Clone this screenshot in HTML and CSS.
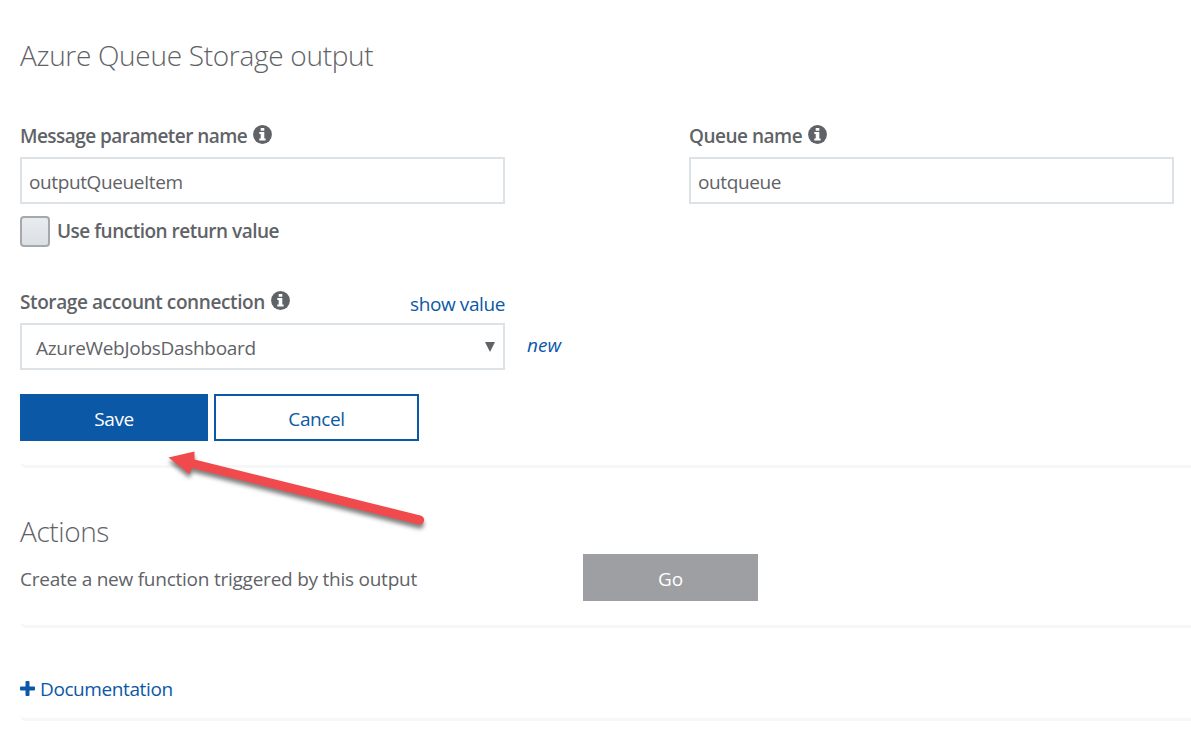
FILE: index.html
```html
<!DOCTYPE html>
<html lang="en">
<head>
<meta charset="utf-8">
<title>Azure Queue Storage output</title>
<link rel="stylesheet" href="styles.css">
</head>
<body>
<svg class="defs" aria-hidden="true">
  <symbol id="info" viewBox="0 0 19 19">
    <circle cx="9.5" cy="9.5" r="9.4" fill="#5f6368"/>
    <path d="M7.7 3h3.6v2.8H7.7zM6.3 7.1h5v6.4h1.3v2H6.3v-2h1.4V9.1H6.3z" fill="#fff"/>
  </symbol>
</svg>
<main class="page">
  <section class="panel output">
    <h1 class="title t-title"><span>Azure Queue Storage output</span></h1>
    <div class="fields">
      <div class="field">
        <div class="label"><span class="t-message">Message parameter name</span><svg class="info"><use href="#info"/></svg></div>
        <div class="textbox"><span>outputQueueItem</span></div>
        <div class="check"><span class="checkbox"></span><span class="t-use">Use function return value</span></div>
      </div>
      <div class="field">
        <div class="label"><span class="t-queue">Queue name</span><svg class="info"><use href="#info"/></svg></div>
        <div class="textbox"><span>outqueue</span></div>
      </div>
    </div>
    <div class="connection">
      <div class="field">
        <div class="label"><span class="t-storage">Storage account connection</span><svg class="info"><use href="#info"/></svg><a class="show">show value</a></div>
        <div class="textbox select"><span class="t-jobs">AzureWebJobsDashboard</span><svg class="caret" viewBox="0 0 10 10"><path d="M0 0h10L5 10z" fill="#5f6368"/></svg></div>
      </div>
      <a class="new">new</a>
    </div>
    <div class="buttons">
      <div class="button save"><span>Save</span></div>
      <div class="button cancel"><span>Cancel</span></div>
    </div>
  </section>
  <section class="panel actions">
    <h2 class="title t-actions"><span>Actions</span></h2>
    <div class="action-row">
      <span class="desc">Create a new function triggered by this output</span>
      <div class="button go"><span>Go</span></div>
    </div>
  </section>
  <section class="panel docs">
    <svg class="plus" viewBox="0 0 15 15"><path d="M5.5 1q0-1 1-1h2q1 0 1 1v4.5H14q1 0 1 1v2q0 1-1 1H9.500V14q0 1-1 1h-2q-1 0-1-1V9.500H1q-1 0-1-1v-2q0-1 1-1h4.500z" fill="#0b58a6"/></svg>
    <a class="docs-link">Documentation</a>
  </section>
  <svg class="arrow" viewBox="0 0 280 100">
    <path d="M8.500 19.500L34.500 13.500V21.500L260.500 77.500A4.600 4.600 0 0 1 258.500 86.500L32 30L29.500 36z" fill="#f04a4c"/>
  </svg>
</main>
</body>
</html>
```
FILE: styles.css
```css
* { box-sizing: border-box; }
body { margin: 0; background: #fff; color: #5f6368; font: 19px/26px "Open Sans", "Noto Sans", sans-serif; letter-spacing: -0.4px; }
h1, h2 { margin: 0; }
span, a { white-space: nowrap; }
.defs { display: block; width: 0; height: 0; }
.page { position: relative; width: 1191px; height: 738px; padding-left: 20px; overflow: hidden; }
.panel { border-bottom: 3px solid #f6f7f7; border-bottom-left-radius: 6px; }
.output { height: 468px; padding-top: 35px; }
.title { height: 40px; font-size: 28px; line-height: 40px; font-weight: 300; }
.t-title { letter-spacing: -0.3px; }
.t-message { letter-spacing: -0.55px; }
.t-use, .t-queue { letter-spacing: -0.5px; }
.t-jobs { letter-spacing: -0.3px; }
.fields { display: flex; gap: 184px; height: 166px; margin-top: 47px; }
.field { width: 485px; }
.label { display: flex; height: 35px; font-weight: 600; }
.label span { line-height: 28px; }
.info { width: 19px; height: 19px; margin: 3px 0 0 6px; }
.textbox { display: flex; align-items: center; height: 47px; padding: 3px 0 0 7px; border: 2px solid #dde2e6; }
.check { display: flex; gap: 7px; margin-top: 12px; font-weight: 600; line-height: 30px; }
.checkbox { width: 30px; height: 31px; border: 2px solid #a3a9ad; border-radius: 4px; background: linear-gradient(#e9ecef, #dbe0e5); }
.connection { display: flex; }
.select { padding-left: 14px; }
.caret { width: 10px; height: 10px; margin: 0 8px 2px auto; }
.show { margin: 3px 0 0 auto; font-weight: 400; color: #0b58a6; }
.new { margin: 44px 0 0 22px; font-style: italic; letter-spacing: 0; color: #0b58a6; }
.buttons { display: flex; gap: 6px; margin-top: 24px; }
.button { display: flex; align-items: center; justify-content: center; height: 47px; padding-top: 3px; }
.save { width: 188px; background: #0b58a6; color: #fff; }
.cancel { width: 205px; border: 2px solid #0b58a6; color: #0b58a6; }
.actions { height: 160px; padding-top: 43px; }
.action-row { display: flex; margin-top: 3px; }
.desc { width: 563px; line-height: 50px; letter-spacing: -0.24px; }
.go { width: 175px; background: #9d9fa2; color: #fff; letter-spacing: 0; }
.docs { display: flex; gap: 5px; height: 93px; padding-top: 48px; color: #0b58a6; }
.plus { width: 15px; height: 15px; margin-top: 5px; }
.arrow { position: absolute; left: 160px; top: 438px; width: 280px; height: 100px; filter: drop-shadow(0 4px 2px rgba(0, 0, 0, .5)); }
```
